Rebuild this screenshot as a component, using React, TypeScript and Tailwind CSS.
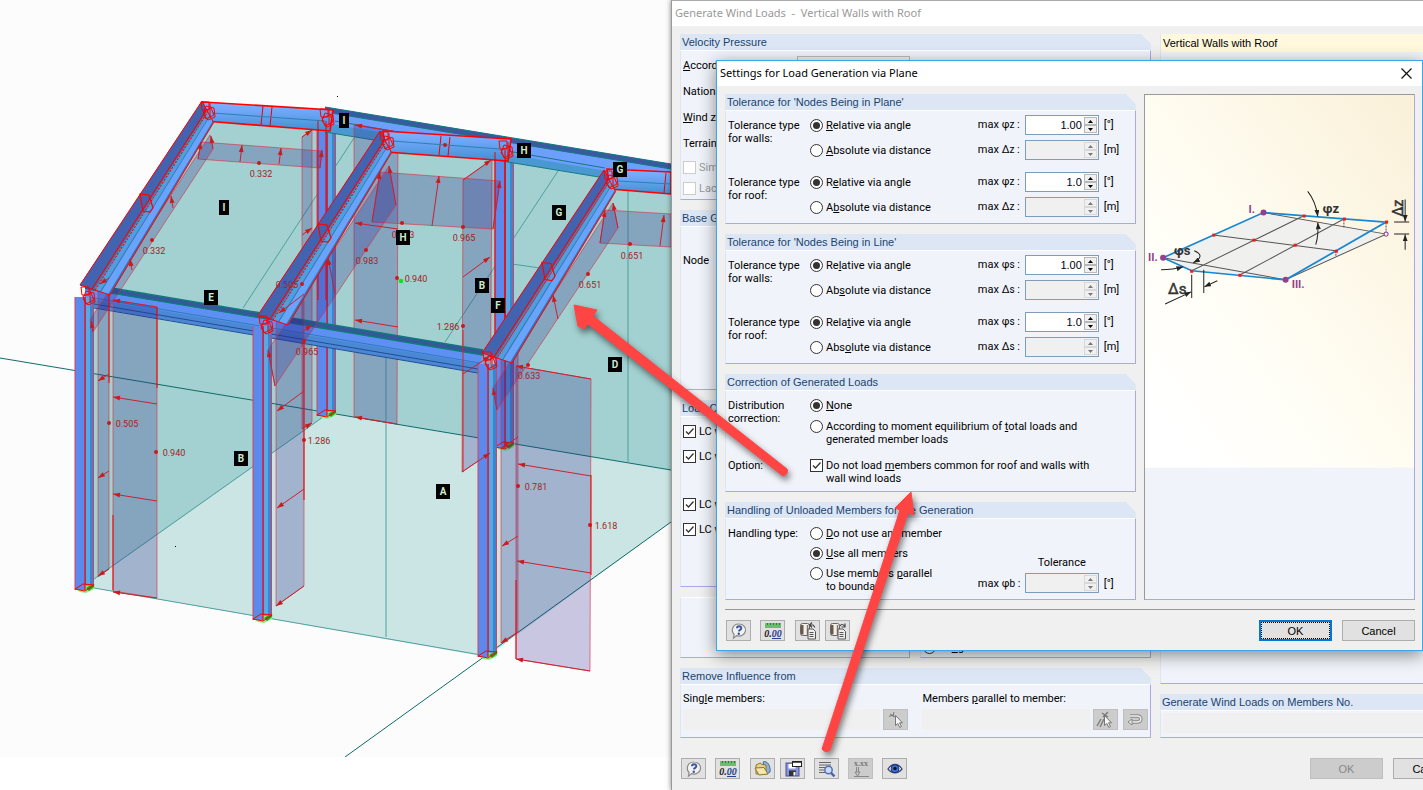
import type { ReactNode } from "react";

type Pt = [number, number];

const pts = (list: Pt[]) => list.map((p) => p.join(",")).join(" ");

/* ---------- 3D model view ---------- */

const rearLoads: Pt[][] = [
  [[302, 137], [312, 130], [312, 422], [302, 429]],
  [[354, 125], [398, 132], [397, 424], [354, 417]],
  [[463, 180], [492, 160], [490, 453], [462, 472]],
];

const frontLoads: Pt[][] = [
  [[113, 300], [157, 307], [157, 598], [113, 591]],
  [[98, 284], [109, 278], [109, 569], [98, 577]],
  [[276, 322], [304, 300], [304, 586], [276, 606]],
  [[516, 366], [591, 379], [590, 671], [516, 659]],
  [[501, 350], [518, 340], [518, 632], [501, 643]],
  [[201, 142], [322, 151], [320, 168], [198, 159]],
  [[90, 320], [210, 135], [213, 149], [93, 332]],
  [[380, 172], [500, 181], [493, 229], [372, 222]],
  [[389, 166], [396, 205], [275, 386], [268, 350]],
  [[605, 210], [671, 214], [671, 247], [600, 243]],
  [[613, 203], [618, 228], [497, 410], [493, 388]],
];

const arrows: [number, number, number, number][] = [
  [157, 307, 113, 300], [157, 404, 113, 397], [157, 501, 113, 494], [157, 598, 113, 592],
  [109, 374, 98, 381], [109, 471, 98, 478], [109, 569, 98, 576], [109, 278, 100, 284],
  [304, 391, 277, 411], [304, 489, 277, 508], [304, 586, 276, 606], [304, 294, 279, 313],
  [302, 137, 312, 130], [302, 235, 312, 228], [302, 332, 312, 325], [302, 429, 312, 423],
  [398, 132, 355, 125], [398, 229, 355, 223], [398, 327, 355, 320], [397, 424, 355, 417],
  [463, 180, 491, 160], [463, 277, 490, 257], [463, 374, 490, 356], [462, 472, 490, 453],
  [591, 379, 516, 366], [591, 476, 518, 464], [591, 573, 517, 561], [590, 671, 516, 659],
  [518, 437, 502, 448], [518, 536, 502, 546], [518, 632, 501, 643],
  [198, 159, 201, 142], [240, 162, 242, 145], [279, 164, 281, 148], [320, 168, 322, 150],
  [213, 149, 211, 136], [173, 208, 171, 196], [132, 270, 130, 259], [93, 332, 91, 321],
  [372, 222, 380, 172], [432, 226, 439, 176], [493, 229, 500, 181], [396, 205, 389, 166],
  [335, 293, 328, 258], [275, 386, 268, 350],
  [600, 243, 605, 210], [660, 246, 664, 215], [618, 228, 613, 203], [558, 319, 553, 295], [497, 410, 493, 388],
];

const dots: Pt[] = [
  [156, 452], [109, 423], [304, 440], [304, 341], [397, 278], [463, 326], [463, 227], [402, 223], [366, 250],
  [590, 525], [518, 486], [528, 365], [259, 163], [152, 240], [302, 284], [630, 244], [588, 274], [445, 145],
];

const values: [number, number, string][] = [
  [261, 177, "0.332"], [154, 254, "0.332"], [287, 288, "0.505"], [127, 427, "0.505"], [174, 456, "0.940"],
  [307, 355, "0.965"], [319, 444, "1.286"], [367, 264, "0.983"], [403, 238, "0.983"], [464, 241, "0.965"],
  [416, 282, "0.940"], [448, 330, "1.286"], [529, 379, "0.633"], [536, 490, "0.781"], [606, 529, "1.618"],
  [632, 259, "0.651"], [590, 288, "0.651"],
];

const badges: [number, number, string][] = [
  [224, 207, "I"], [344, 120, "I"], [211, 297, "E"], [403, 237, "H"], [524, 150, "H"], [620, 169, "G"],
  [559, 212, "G"], [482, 285, "B"], [498, 305, "F"], [615, 364, "D"], [443, 491, "A"], [241, 458, "B"],
];

function LoadArrow({ at }: { at: [number, number, number, number] }) {
  const [x1, y1, x2, y2] = at;
  const len = Math.hypot(x2 - x1, y2 - y1) || 1;
  const ux = (x2 - x1) / len;
  const uy = (y2 - y1) / len;
  const bx = x2 - ux * 7;
  const by = y2 - uy * 7;
  const head: Pt[] = [[x2, y2], [bx - uy * 2.4, by + ux * 2.4], [bx + uy * 2.4, by - ux * 2.4]];
  return (
    <g>
      <line x1={x1} y1={y1} x2={x2} y2={y2} stroke="#cc2030" strokeWidth="1" />
      <polygon points={pts(head)} fill="#c81c1c" />
    </g>
  );
}

function LoadPanels({ panels }: { panels: Pt[][] }) {
  return (
    <g fill="rgba(44,36,140,0.25)" stroke="#e02c3c" strokeOpacity="0.6">
      {panels.map((p, i) => (
        <polygon key={i} points={pts(p)} />
      ))}
    </g>
  );
}

function Column({ x, top, bottom }: { x: number; top: number; bottom: number }) {
  return (
    <g>
      <path d={`M${x + 2} ${bottom}l8-5 10-1-1 5-8 4-6-1z`} fill="#7cf47c" />
      <path d={`M${x + 11} ${bottom - 2}l8-5v4l-5 4z`} fill="#22a022" />
      <rect x={x} y={top} width="10" height={bottom - top} fill="#5b8aec" />
      <rect x={x + 10} y={top} width="9" height={bottom - top - 5} fill="#3c84cc" />
      <rect x={x + 11} y={top} width="4" height={bottom - top - 4} fill="#58a8e8" />
      <g fill="none" stroke="#d8405c">
        <path d={`M${x} ${top}V${bottom}M${x + 18.5} ${top}V${bottom - 5}`} />
        <path d={`M${x + 10} ${top}V${bottom}`} stroke="#ff0000" strokeWidth="1.2" />
        <path d={`M${x} ${bottom - 1}l8-5 11 1-9 6z`} stroke="#ff0000" />
      </g>
    </g>
  );
}

function Rafter({ a, b }: { a: Pt; b: Pt }) {
  const [ax, ay] = a;
  const [bx, by] = b;
  const strip = (p: number, q: number): string =>
    pts([[ax + p, ay + p / 3], [bx + p / 2.6, by + p * 0.72], [bx + q / 2.6, by + q * 0.72], [ax + q, ay + q / 3]]);
  const mx = (ax + bx) / 2 + 5;
  const my = (ay + by) / 2 + 9;
  return (
    <g>
      <polygon points={strip(0, 30)} fill="#3a70b0" />
      <polygon points={strip(0, 12)} fill="#4264b0" />
      <polygon points={strip(14, 20)} fill="#4ca0e0" />
      <polygon points={strip(21, 28)} fill="#68a4fc" />
      <g fill="none" stroke="#ff0000">
        <polygon points={strip(0, 30)} />
        <polyline points={strip(12, 12)} strokeWidth="0.9" />
        <polyline points={strip(15, 15)} strokeWidth="0.9" strokeDasharray="2 1.5" />
        <path d={`M${mx - 6} ${my - 8}l9 1 4 13-3 4-7-1z`} strokeWidth="1.2" />
      </g>
    </g>
  );
}

function Joint({ x, y }: { x: number; y: number }) {
  return (
    <path
      d={`M${x - 6} ${y - 9}h8v8h-7zM${x - 1} ${y - 5}l8 2 1 9-7 3-5-6zM${x - 4} ${y}l8-3 3 7-8 4zM${x + 3} ${y - 8}v15`}
      fill="none"
      stroke="#ff0000"
    />
  );
}

function ModelView() {
  return (
    <svg viewBox="0 0 671 757" className="block w-full bg-[#fcfcfc]" role="img" aria-label="Structural model">
      <defs>
        <linearGradient id="beam" x1="0" y1="0" x2="0" y2="1">
          <stop offset="0" stopColor="#80b2ff" />
          <stop offset="0.4" stopColor="#6ba4f4" />
          <stop offset="1" stopColor="#3f90d0" />
        </linearGradient>
      </defs>

      <polygon points="94,588 94,580 330,413 671,470 671,522 487,657" fill="#cae5e3" />
      <polygon points="90,290 205,105 340,118 671,172 671,470 330,413 94,580" fill="#a3d0d0" />
      <g stroke="#4f9f9f" strokeWidth="1" fill="none">
        <path d="M0 358L671 470M345 757L671 522" stroke="#0e6b6b" />
        <path d="M94 588L487 656M94 579L330 412M386 345V637M628 190V463M354 138L243 308M558 171L445 342M498 262L540 268" />
      </g>

      {/* rear columns and ridge beam */}
      <Column x={317} top={115} bottom={416} />
      <Column x={495} top={150} bottom={448} />
      <polygon points="325,107 671,164 671,190 605,178 325,132" fill="#4a98d2" />
      <polygon points="325,112 671,169 671,182 325,123" fill="#6d9fff" />
      <polygon points="325,107 671,164 671,169 325,112" fill="#3a5aa0" />
      <path d="M325 107L671 164M325 112L671 169M325 132L605 178M335 121L605 168" stroke="#147a80" fill="none" />
      <LoadPanels panels={rearLoads} />

      {/* eaves beam */}
      <polygon points="85,284 483,350 478,373 85,306" fill="#4a88d4" />
      <polygon points="85,289 483,355 480,364 85,298" fill="#5e90f4" />
      <polygon points="85,284 483,350 483,355 85,289" fill="#34589a" />
      <path d="M88 284L483 350M88 289L483 355" stroke="#0e7a7a" strokeWidth="1.3" fill="none" />
      <path d="M94 298L480 363" stroke="#2c7cb8" fill="none" />
      <path d="M94 304L478 369M94 308L478 373" stroke="#244c98" fill="none" />

      <path d="M463 330V472" stroke="#e02020" fill="none" />
      <Column x={75} top={297} bottom={590} />
      <Column x={253} top={326} bottom={620} />
      <Column x={478} top={364} bottom={657} />

      <LoadPanels panels={frontLoads} />
      <path d="M109 278V383M113 515V590M157 307V388M304 340V500M591 475V575M516 580V659" stroke="#f00000" fill="none" />

      {/* loaded ridge members */}
      <g stroke="#ff0000" strokeWidth="1.6">
        <polygon points="203,102 333,110 330,131 205,121" fill="url(#beam)" />
        <polygon points="383,131 511,139 508,161 386,152" fill="url(#beam)" />
        <polygon points="607,169 671,172 671,194 610,189" fill="url(#beam)" />
      </g>
      <path
        d="M263 106l-2 19M272 107l-2 19M441 136l-2 19M450 137l-2 19M666 173l-2 20M318 121V300M326 121V300M495 152V345M505 150V345"
        stroke="#f00000"
        fill="none"
      />
      <path d="M212 113L325 121M392 141L500 149M618 181L671 184" stroke="#2c80b0" fill="none" />

      <Rafter a={[80, 285]} b={[202, 101]} />
      <Rafter a={[258, 315]} b={[380, 131]} />
      <Rafter a={[482, 353]} b={[604, 170]} />

      {[[87, 296], [265, 325], [489, 361], [207, 111], [326, 118], [386, 141], [505, 150], [610, 180]].map(([x, y]) => (
        <Joint key={x} x={x} y={y} />
      ))}

      {arrows.map((a, i) => (
        <LoadArrow key={i} at={a} />
      ))}
      {dots.map(([x, y], i) => (
        <circle key={i} cx={x} cy={y} r="2" fill="#cc1818" />
      ))}
      <circle cx="401" cy="281" r="2.3" fill="#10e020" />
      <rect x="337" y="96" width="1" height="1" />
      <rect x="175" y="546" width="1" height="1" />

      <g fill="#a02424" fontSize="9" textAnchor="middle">
        {values.map(([x, y, v], i) => (
          <text key={i} x={x} y={y}>{v}</text>
        ))}
      </g>
      {badges.map(([x, y, b], i) => (
        <g key={i}>
          <rect x={b === "I" ? x - 5 : x - 7} y={y - 7} width={b === "I" ? 10 : 14} height="15" />
          <text x={x} y={y + 4} fontSize="10" fontWeight="bold" textAnchor="middle" fill="#cfeacf">{b}</text>
        </g>
      ))}
    </svg>
  );
}

/* ---------- form parts ---------- */

function Group({ title, children }: { title?: string; children?: ReactNode }) {
  return (
    <section className="flex flex-col">
      {title && (
        <h2 className="h-4 bg-[#dce6f4] px-0.5 font-['Liberation_Sans',Arial,sans-serif] leading-4 whitespace-nowrap text-[#1a4470] [clip-path:polygon(0_0,calc(100%-10px)_0,100%_10px,100%_100%,0_100%)]">
          {title}
        </h2>
      )}
      <div className="flex-1 border-t border-r border-b border-l border-t-white border-r-[#a9a9ea] border-b-[#a9a9ea] border-l-[#dce6f4] bg-[#f0f4fa]">
        {children}
      </div>
    </section>
  );
}

function Radio({ name, checked, children }: { name: string; checked?: boolean; children: ReactNode }) {
  return (
    <label className="flex items-start gap-[3px] leading-[13px]">
      <input
        type="radio"
        name={name}
        defaultChecked={checked}
        className="relative size-[13px] shrink-0 appearance-none rounded-full border border-[#333] bg-white checked:before:absolute checked:before:inset-0.5 checked:before:rounded-full checked:before:bg-[#333]"
      />
      <span>{children}</span>
    </label>
  );
}

function Check({ checked, disabled, children }: { checked?: boolean; disabled?: boolean; children: ReactNode }) {
  return (
    <label className={`flex items-start gap-[3px] leading-[13px] ${disabled ? "text-[#999]" : ""}`}>
      <span className="relative size-[13px] shrink-0">
        <input
          type="checkbox"
          defaultChecked={checked}
          disabled={disabled}
          className="peer block size-[13px] appearance-none border border-[#333] bg-white disabled:border-[#ccc]"
        />
        <svg viewBox="0 0 13 13" className="pointer-events-none absolute inset-0 hidden peer-checked:block">
          <path d="M3 6.5l2.5 2.5L10.5 3.5" fill="none" stroke="#333" strokeWidth="1.3" />
        </svg>
      </span>
      <span>{children}</span>
    </label>
  );
}

function Spin({ label, value, disabled }: { label: string; value?: string; disabled?: boolean }) {
  const btn = "flex flex-1 items-center justify-center border border-[#b8b8b8] bg-[#f0f0f0] disabled:border-[#d8d8d8] disabled:text-[#777]";
  return (
    <div className={`flex h-5 w-[74px] border border-[#7f9db9] p-px ${disabled ? "bg-[#f0f0f0]" : "bg-white"}`}>
      <input
        aria-label={label}
        defaultValue={value}
        disabled={disabled}
        className="min-w-0 flex-1 bg-transparent pr-0.5 text-right font-['Liberation_Sans',Arial,sans-serif] text-[11px] text-[#001]"
      />
      <div className="flex w-[13px] flex-col">
        <button className={btn} disabled={disabled} aria-label="Increase">
          <svg width="5" height="3"><path d="M0 3L2.5 0 5 3z" fill="currentColor" /></svg>
        </button>
        <button className={btn} disabled={disabled} aria-label="Decrease">
          <svg width="5" height="3"><path d="M0 0L2.5 3 5 0z" fill="currentColor" /></svg>
        </button>
      </div>
    </div>
  );
}

function ToleranceRow({ symbol, sub, unit, value, disabled, children }: {
  symbol: string; sub: string; unit: string; value?: string; disabled?: boolean; children: ReactNode;
}) {
  return (
    <div className="flex h-5 items-center">
      <div className="flex-1">{children}</div>
      <span className="w-[47px] whitespace-nowrap">
        max {symbol}<span className="text-[10px]">{sub}</span> :
      </span>
      <Spin label={`max ${symbol}${sub}`} value={value} disabled={disabled} />
      <span className="w-[34px] pl-[5px]">{unit}</span>
    </div>
  );
}

function TolerancePair({ place, sub, value, relative, absolute }: {
  place: string; sub: string; value: string; relative: ReactNode; absolute: ReactNode;
}) {
  const name = `${place}-${sub}`;
  return (
    <div className="flex">
      <p className="w-[82px] pt-1 leading-[13px]">Tolerance type<br />for {place}:</p>
      <div className="flex flex-1 flex-col gap-[5px]">
        <ToleranceRow symbol="φ" sub={sub} unit="[°]" value={value}>
          <Radio name={name} checked>{relative}</Radio>
        </ToleranceRow>
        <ToleranceRow symbol="Δ" sub={sub} unit="[m]" disabled>
          <Radio name={name}>{absolute}</Radio>
        </ToleranceRow>
      </div>
    </div>
  );
}

function ToolButton({ label, disabled, children }: { label: string; disabled?: boolean; children: ReactNode }) {
  return (
    <button
      aria-label={label}
      disabled={disabled}
      className="flex h-[21px] w-[25px] shrink-0 items-center justify-center border border-[#adadad] bg-[#e1e1e1] disabled:border-[#bfbfbf] disabled:bg-[#ccc]"
    >
      <svg width="18" height="18" viewBox="0 0 18 18" fill="none">{children}</svg>
    </button>
  );
}

/* ---------- icons ---------- */

const helpIcon = (
  <>
    <path d="M9 2a6.500 6 0 1 1-2.300 11.600L3.500 16l.6-3.500A6.200 6.200 0 0 1 9 2z" fill="#f2f2f2" stroke="#8a8a8a" strokeWidth="1.200" />
    <path d="M7 6.300c0-2.600 4.400-2.600 4.300 0-.1 1.500-2.200 1.500-2.400 3" stroke="#3a559c" strokeWidth="2" />
    <circle cx="8.800" cy="11.700" r="1.200" fill="#3a559c" />
  </>
);

const unitsIcon = (
  <>
    <rect x="1" y="1" width="16" height="5" fill="#69bf69" />
    <path d="M3.500 1v2M6.500 1v2M9.500 1v2M12.500 1v2M15.500 1v2" stroke="#2e7d32" />
    <text x="9" y="15" fontSize="10" fontStyle="italic" fontWeight="bold" fontFamily="Liberation Serif, serif" textAnchor="middle" fill="#222">
      0.<tspan fill="#23418c">00</tspan>
    </text>
    <path d="M8 16.500h9" stroke="#23418c" />
  </>
);

const defaultsIcon = (save: boolean) => (
  <>
    <rect x="1.500" y="1.500" width="9" height="12" rx="2" fill="#f3efe8" stroke="#666" />
    <path d="M2 3h2.500v9.500H2z" fill="#6b5848" />
    <path d="M8.500 3v10" stroke="#8a7868" strokeWidth="1.500" />
    <path d="M9 7h5l2.500 2.500V17H9z" fill="#eee" stroke="#555" />
    <path d="M10.500 10.500h4M10.500 12.500h4M10.500 14.500h4" stroke="#555" />
    {save ? (
      <path d="M11 4c1-2 3-2 4.500 0M16 1.500V5h-3.500" stroke="#444" strokeWidth="1.200" />
    ) : (
      <path d="M11 3h3l2 2.500M13 .5L10.500 3l2.500 2.500" stroke="#444" strokeWidth="1.200" />
    )}
  </>
);

const openIcon = (
  <>
    <path d="M9 2c4-2 8 4 7 10l-3 2z" fill="#8fb2dc" stroke="#4a6a9a" />
    <path d="M2 5l4-2 2 1.500 4 .5v9H2z" fill="#e6d38a" stroke="#8a7430" />
    <path d="M1 8l9-.5 4 6.500-9 1z" fill="#f5e7a8" stroke="#8a7430" />
  </>
);

const saveIcon = (
  <>
    <rect x="2" y="3" width="13" height="13" fill="#8a94dc" stroke="#4a5090" />
    <rect x="5" y="10.500" width="7" height="5.500" fill="#333" />
    <rect x="9.500" y="12" width="2" height="3.500" fill="#fff" />
    <rect x="4.500" y="4" width="7" height="4.500" fill="#fff" />
    <rect x="8.500" y="1.500" width="9" height="5" fill="#fff" stroke="#222" />
    <path d="M8.500 2h9" stroke="#222" strokeWidth="1.500" />
  </>
);

const detailsIcon = (
  <>
    <path d="M1 2.500h12M1 5h12M1 7.500h6M1 10h5M1 12.500h6" stroke="#666" />
    <circle cx="10.500" cy="10" r="3.700" fill="#c8dcff" stroke="#5470b0" strokeWidth="1.500" />
    <path d="M13 12.800l3.500 3.500" stroke="#4a68b0" strokeWidth="2.500" />
  </>
);

const valuesIcon = (
  <>
    <text x="9" y="6" fontSize="8" fontWeight="bold" fontFamily="Liberation Serif, serif" textAnchor="middle" fill="#777">x.xx</text>
    <path d="M4.500 7v5M6.500 7v5M3 12l2.500 4 2.500-4zM2 16.500h15" stroke="#888" />
  </>
);

const eyeIcon = (
  <>
    <path d="M2 9c4-6 10-6 14 0-4 5-10 5-14 0z" fill="#fff" stroke="#3a4468" strokeWidth="1.300" />
    <circle cx="9" cy="8.700" r="4" fill="#3b6fe0" stroke="#223068" />
    <circle cx="9" cy="8.500" r="1.700" fill="#0a0f28" />
  </>
);

const cursor = <path d="M8.500 4.500v10l2.300-2 2 4 1.700-1-2-3.700h3z" fill="#f6f6f6" stroke="#777" />;

const pickIcon = (
  <>
    <path d="M3 3l5 3M7 1l-1 5M2 5.500l5-2" stroke="#777" />
    {cursor}
  </>
);

const pickParallelIcon = (
  <>
    <path d="M1 15L5 8M4 16l4-8M6 2l6 4M12 1L7 6" stroke="#777" strokeWidth="1.300" />
    {cursor}
  </>
);

const backIcon = (
  <>
    <path d="M4 5h7c5 0 5 6 0 6H5" stroke="#888" strokeWidth="3.500" />
    <path d="M4 5h7c5 0 5 6 0 6H5" stroke="#eee" strokeWidth="1.500" />
    <path d="M6 8l-4 3 4 3z" fill="#eee" stroke="#888" />
  </>
);

/* ---------- sketch shown in the dialog ---------- */

const sketchPointers = [
  "M1308 191q8 10 10 25", "M1316 244q3-10 2-22", "M1162 269q12 0 22-3", "M1195 250q12 5-1 12",
  "M1166 303l26-12", "M1218 280l-13 6", "M1405 199v22", "M1405 249v-15",
];

function PlaneSketch() {
  return (
    <svg viewBox="1146 95 268 371" className="block w-full">
      <defs>
        <linearGradient id="paper" x1="0" y1="1" x2="1" y2="0">
          <stop offset="0.1" stopColor="#ffffff" />
          <stop offset="0.45" stopColor="#fffdf3" />
          <stop offset="1" stopColor="#faf0d8" />
        </linearGradient>
        <marker id="tip" viewBox="0 0 8 6" refX="8" refY="3" markerWidth="7" markerHeight="5" markerUnits="userSpaceOnUse" orient="auto">
          <path d="M0 0L8 3 0 6z" fill="#222" />
        </marker>
      </defs>
      <rect x="1146" y="95" width="268" height="371" fill="url(#paper)" />
      <polygon points="1264,212 1386,233 1286,279 1192,270 1164,257" fill="#f0f0ee" />
      <g stroke="#555" fill="none">
        <path d="M1264 212L1386 233.500L1286 279L1164 257M1304.500 215L1192.500 270M1344 218.500L1240 274.500M1214 234.500L1336 250" />
        <path d="M1386 222v11M1344 219v8M1336 250v5" strokeDasharray="2 1" />
      </g>
      <polygon points="1264,212 1386,221.5 1286,279 1192.5,270 1164,257" fill="none" stroke="#1787d0" strokeWidth="1.700" />
      {[[1304, 215], [1344, 218], [1386, 221], [1214, 234], [1254, 239], [1295, 244], [1336, 250], [1192, 270], [1240, 274]].map(([x, y]) => (
        <rect key={x} x={x - 1} y={y - 1} width="3" height="3" fill="#ee1c1c" />
      ))}
      {[[1264, 212], [1164, 257], [1286, 279]].map(([x, y]) => (
        <circle key={x} cx={x} cy={y} r="3" fill="#94408c" />
      ))}
      <circle cx="1386" cy="233.500" r="2" fill="#fff" stroke="#94408c" />
      <g stroke="#222" fill="none">
        {sketchPointers.map((d) => (
          <path key={d} d={d} markerEnd="url(#tip)" />
        ))}
        <path d="M1394 221.500h15M1394 233.500h15M1192.500 274v23M1204.500 269v23" />
      </g>
      <g fontWeight="bold" fill="#333" fontSize="13">
        <text x="1323" y="212">φz</text>
        <text x="1175" y="254">φs</text>
        <text x="1169" y="293" fontSize="15" fontWeight="normal" stroke="#333" strokeWidth="0.500">Δs</text>
        <text transform="translate(1403 216) rotate(-90)" fontSize="14" fontWeight="normal" stroke="#333" strokeWidth="0.500">Δz</text>
      </g>
      <g fontWeight="bold" fill="#94408c" fontSize="11">
        <text x="1249" y="212">I.</text>
        <text x="1149" y="260">II.</text>
        <text x="1292" y="287">III.</text>
      </g>
    </svg>
  );
}

/* ---------- windows ---------- */

function SettingsDialog() {
  return (
    <div
      role="dialog"
      aria-label="Settings for Load Generation via Plane"
      className="absolute top-[60px] right-0 left-11 border border-[#3aa7ea] bg-[#f0f0f0] shadow-[0_4px_16px_rgba(0,0,0,0.45)]"
    >
      <header className="flex h-[25px] items-center justify-between bg-white pr-2.5 pl-[3px]">
        <h1 className="font-['Noto_Sans',sans-serif] text-[11px]">Settings for Load Generation via Plane</h1>
        <button aria-label="Close">
          <svg width="11" height="11" viewBox="0 0 11 11"><path d="M.5.5l10 10M10.500.5l-10 10" stroke="#111" strokeWidth="1.200" /></svg>
        </button>
      </header>

      <div className="pt-2 pr-[7px] pl-2">
        <div className="flex gap-2">
          <div className="flex flex-[412] flex-col gap-2.5">
            <Group title="Tolerance for 'Nodes Being in Plane'">
              <div className="flex flex-col gap-3 px-0.5 pt-1 pb-[6px]">
                <TolerancePair place="walls" sub="z" value="1.00" relative={<><u>R</u>elative via angle</>} absolute={<><u>A</u>bsolute via distance</>} />
                <TolerancePair place="roof" sub="z" value="1.0" relative={<>R<u>e</u>lative via angle</>} absolute={<>A<u>b</u>solute via distance</>} />
              </div>
            </Group>
            <Group title="Tolerance for 'Nodes Being in Line'">
              <div className="flex flex-col gap-3 px-0.5 pt-1 pb-[6px]">
                <TolerancePair place="walls" sub="s" value="1.00" relative={<>Re<u>l</u>ative via angle</>} absolute={<>Ab<u>s</u>olute via distance</>} />
                <TolerancePair place="roof" sub="s" value="1.0" relative={<>Rela<u>t</u>ive via angle</>} absolute={<>Abs<u>o</u>lute via distance</>} />
              </div>
            </Group>
            <Group title="Correction of Generated Loads">
              <div className="flex flex-col gap-[13px] px-0.5 pt-2 pb-[6px] leading-[13px]">
                <div className="flex">
                  <p className="w-[82px]">Distribution<br />correction:</p>
                  <div className="flex flex-col gap-2">
                    <Radio name="correction" checked><u>N</u>one</Radio>
                    <Radio name="correction">According to moment equilibrium of <u>t</u>otal loads and<br />generated member loads</Radio>
                  </div>
                </div>
                <div className="flex">
                  <p className="w-[82px]">Option:</p>
                  <Check checked>Do not load <u>m</u>embers common for roof and walls with<br />wall wind loads</Check>
                </div>
              </div>
            </Group>
            <Group title="Handling of Unloaded Members for the Generation">
              <div className="flex px-0.5 pt-2 pb-[6px] leading-[13px]">
                <p className="w-[82px]">Handling type:</p>
                <div className="flex flex-1 flex-col gap-[7px]">
                  <Radio name="handling"><u>D</u>o not use any member</Radio>
                  <Radio name="handling" checked><u>U</u>se all members</Radio>
                  <Radio name="handling">Use members <u>p</u>arallel<br />to boundary</Radio>
                </div>
                <div className="flex flex-col justify-end gap-1">
                  <p className="pl-[60px]">Tolerance</p>
                  <ToleranceRow symbol="φ" sub="b" unit="[°]" disabled>{null}</ToleranceRow>
                </div>
              </div>
            </Group>
          </div>
          <div className="flex-[270] border-t border-r border-b border-l border-t-[#999] border-r-[#a9a9ea] border-b-[#a9a9ea] border-l-[#999] bg-[#f0f4fa]">
            <PlaneSketch />
          </div>
        </div>

        <footer className="mt-[9px] flex items-center border-t border-[#999] pt-2.5 pb-[9px]">
          <div className="flex gap-[9px] pl-px">
            <ToolButton label="Help">{helpIcon}</ToolButton>
            <ToolButton label="Units">{unitsIcon}</ToolButton>
          </div>
          <div className="flex gap-[5px] pl-2.5">
            <ToolButton label="Restore defaults">{defaultsIcon(false)}</ToolButton>
            <ToolButton label="Save as defaults">{defaultsIcon(true)}</ToolButton>
          </div>
          <div className="ml-auto flex gap-2.5 font-['Liberation_Sans',Arial,sans-serif]">
            <button className="h-[21px] w-[73px] border-2 border-[#0078d7] bg-[#e1e1e1] leading-4 outline-1 -outline-offset-3 outline-dotted outline-black">OK</button>
            <button className="h-[21px] w-[73px] border border-[#adadad] bg-[#e1e1e1] leading-4">Cancel</button>
          </div>
        </footer>
      </div>
    </div>
  );
}

function WindLoadsWindow() {
  return (
    <div className="relative h-full overflow-hidden border-l border-[#999] bg-[#f0f0f0]">
      <header className="flex h-[26px] items-center border-t border-[#aaa] bg-white pl-[3px]">
        <h1 className="font-['Noto_Sans',sans-serif] text-[11px] whitespace-pre text-[#999]">{"Generate Wind Loads  -  Vertical Walls with Roof"}</h1>
      </header>

      <div className="w-[calc(100%+51px)] px-2 pt-2">
        <div className="grid grid-cols-[20fr_13fr] gap-[9px]">
          <div className="flex flex-col gap-2.5">
            <Group title="Velocity Pressure">
              <div className="px-0.5 pt-0.5">
                <label className="flex h-[26px] items-center">
                  <span className="w-[114px]"><u>A</u>ccording to:</span>
                  <select disabled className="h-[21px] w-[113px] border border-[#bbb] bg-[#f0f0f0]"><option></option></select>
                </label>
                <p className="h-[26px] leading-[26px]">National annex:</p>
                <p className="h-[26px] leading-[26px]"><u>W</u>ind zone:</p>
                <p className="h-[26px] leading-[26px]">Terrain category:</p>
                <div className="flex h-[21px] items-center"><Check disabled>Simplified</Check></div>
                <div className="flex h-[21px] items-center"><Check disabled>Lack of correlation</Check></div>
              </div>
            </Group>
            <Group title="Base Geometry">
              <p className="px-0.5 pt-6 pb-[118px] leading-5">Node</p>
            </Group>
            <Group title="Load Cases">
              <div className="flex flex-col gap-7 px-0.5 pt-1 pb-[47px]">
                {[0, 1].map((block) => (
                  <div key={block} className="flex flex-col gap-[5px]">
                    <div className="flex h-5 items-center"><Check checked>LC w+</Check></div>
                    <div className="flex h-5 items-center"><Check checked>LC w-</Check></div>
                  </div>
                ))}
              </div>
            </Group>
            <div className="grid grid-cols-2 gap-2.5">
              <Group />
              <Group>
                <div className="px-0.5 pt-[43px] pb-[3px]"><Radio name="side">Lo<u>n</u>g side</Radio></div>
              </Group>
            </div>
            <Group title="Remove Influence from">
              <div className="grid grid-cols-2 gap-3.5 px-0.5 pt-1 pb-[7px]">
                <div>
                  <label htmlFor="single" className="block leading-5">Sing<u>l</u>e members:</label>
                  <div className="flex gap-[3px]">
                    <input id="single" disabled className="h-[21px] min-w-0 flex-1 bg-[#f0f0f0]" />
                    <ToolButton label="Pick members" disabled>{pickIcon}</ToolButton>
                  </div>
                </div>
                <div>
                  <label htmlFor="parallel" className="block leading-5">Members <u>p</u>arallel to member:</label>
                  <div className="flex gap-[3px]">
                    <input id="parallel" disabled className="h-[21px] min-w-0 flex-1 bg-[#f0f0f0]" />
                    <div className="flex gap-[5px]">
                      <ToolButton label="Pick parallel members" disabled>{pickParallelIcon}</ToolButton>
                      <ToolButton label="Undo pick" disabled>{backIcon}</ToolButton>
                    </div>
                  </div>
                </div>
              </div>
            </Group>
          </div>

          <div className="flex flex-col gap-2.5">
            <section className="flex flex-1 flex-col border-b border-l border-b-[#a9a9ea] border-l-[#dce6f4] bg-[#f0f4fa]">
              <h2 className="bg-[#fff8dc] px-0.5 font-['Liberation_Sans',Arial,sans-serif] leading-[18px]">Vertical Walls with Roof</h2>
            </section>
            <Group title="Generate Wind Loads on Members No.">
              <div className="px-0.5 pt-0.5 pb-1">
                <input aria-label="Members" disabled className="block h-5 w-full bg-[#f0f0f0]" />
              </div>
            </Group>
          </div>
        </div>

        <footer className="flex items-center pt-5 pb-2.5 pl-px">
          <div className="flex gap-[9px]">
            <ToolButton label="Help">{helpIcon}</ToolButton>
            <ToolButton label="Units">{unitsIcon}</ToolButton>
          </div>
          <div className="flex gap-[5px] pl-2.5">
            <ToolButton label="Open">{openIcon}</ToolButton>
            <ToolButton label="Save">{saveIcon}</ToolButton>
          </div>
          <div className="flex gap-[9px] pl-[9px]">
            <ToolButton label="Load generation settings">{detailsIcon}</ToolButton>
            <ToolButton label="Values" disabled>{valuesIcon}</ToolButton>
            <ToolButton label="Preview">{eyeIcon}</ToolButton>
          </div>
          <div className="ml-auto flex gap-2.5 font-['Liberation_Sans',Arial,sans-serif]">
            <button disabled className="h-[21px] w-[73px] border border-[#bfbfbf] bg-[#ccc] leading-4 text-[#888]">OK</button>
            <button className="h-[21px] w-[73px] border border-[#adadad] bg-[#e1e1e1] leading-4">Cancel</button>
          </div>
        </footer>
      </div>

      <SettingsDialog />
    </div>
  );
}

function Callouts() {
  return (
    <svg viewBox="0 0 1423 790" className="pointer-events-none absolute inset-x-0 top-0 w-full drop-shadow-[2px_4px_3px_rgba(0,0,0,0.5)]">
      <g fill="#ff4444" stroke="#ff4444" strokeWidth="1" strokeLinejoin="round">
        <path d="M574 305L597 310 593 316 787 469Q789 474 783 476L588 324 584 329 578 326z" />
        <path d="M911 492L914 515 908 513 830 750Q826 754 822 749L900 510 895 508z" />
      </g>
    </svg>
  );
}

export default function App() {
  return (
    <main className="relative min-h-screen overflow-hidden bg-white font-[Roboto,'Liberation_Sans',sans-serif] text-[11px] text-black">
      <div className="grid min-h-screen grid-cols-[671fr_752fr]">
        <ModelView />
        <div className="relative min-w-0 shadow-[0_0_5px_rgba(0,0,0,0.5)]">
          <WindLoadsWindow />
        </div>
      </div>
      <Callouts />
    </main>
  );
}
